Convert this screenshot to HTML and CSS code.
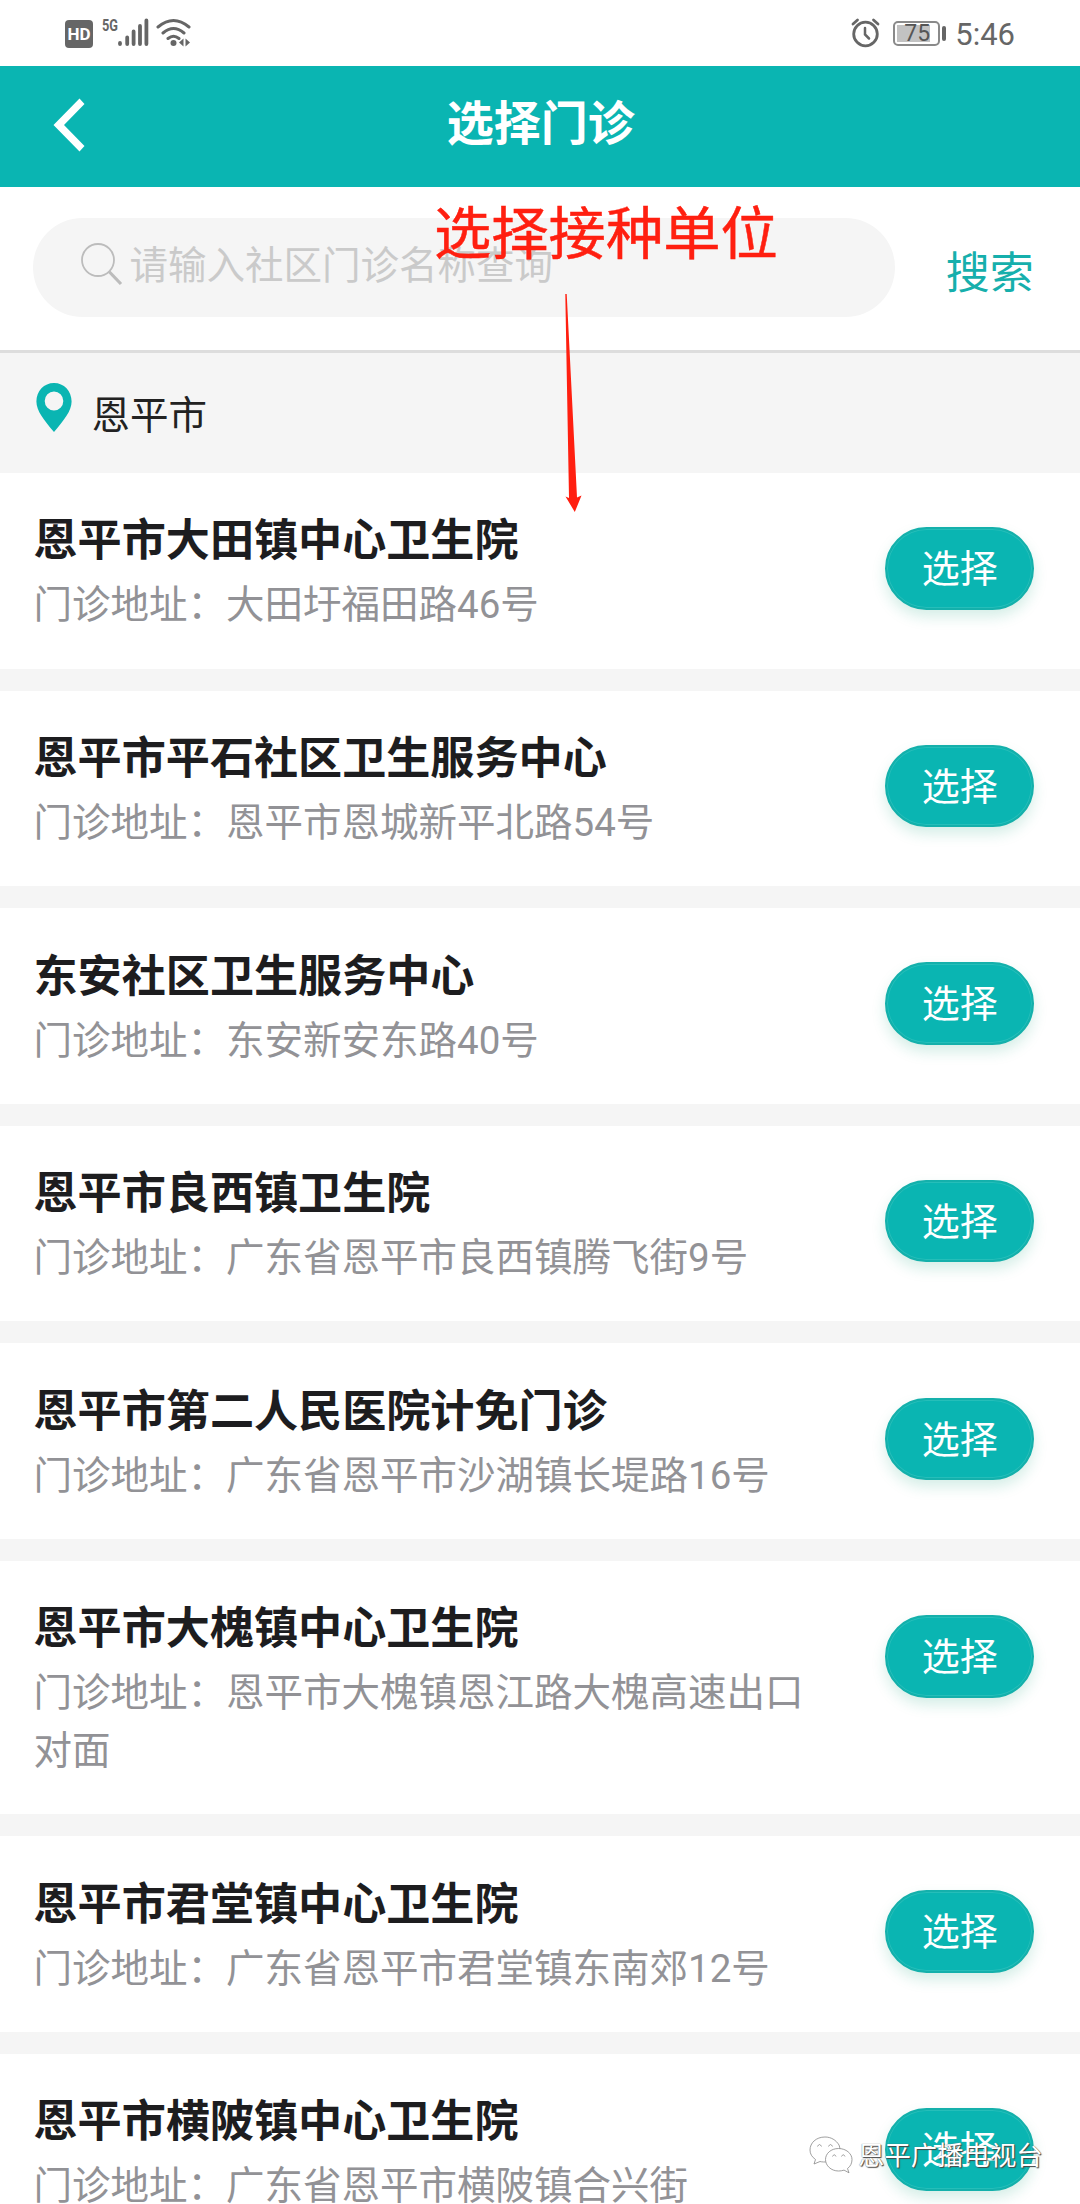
FILE: index.html
```html
<!DOCTYPE html>
<html lang="zh-CN">
<head>
<meta charset="utf-8">
<title>选择门诊</title>
<link rel="stylesheet" href="styles.css">
</head>
<body>
<div class="screen">
  <div class="status">
    <div class="status-left">
      <span class="hd">HD</span>
      <span class="net">5G</span>
      <svg class="signal" width="32" height="30" viewBox="0 0 32 30" stroke="#666" stroke-width="3.8" stroke-linecap="round"><path d="M3 25v1M10.2 19.5v6.5M16.6 13.500v12.500M23 8v18M29.400 2.500v23.500"/></svg>
      <svg class="wifi" width="36" height="30" viewBox="0 0 36 30" fill="none" stroke="#666" stroke-width="3" stroke-linecap="round"><path d="M2 9Q17.500-4 33 9M7 15Q17.500 6 28 15M12 20.500Q17.500 16 23 20.500"/><circle cx="17.500" cy="25" r="3" fill="#666" stroke="none"/><path d="M27.500 20.500v8l-4.500-4zM29.500 20.500v8l4.500-4z" fill="#666" stroke="none"/></svg>
    </div>
    <div class="status-right">
      <svg width="30" height="30" viewBox="0 0 30 30" fill="none" stroke="#666" stroke-width="2.800" stroke-linecap="round"><circle cx="14.500" cy="16" r="11.800"/><path d="M14 10v6.500l4 4" stroke-width="2.500"/><path d="M2 6l4.500-4M27 6l-4.500-4"/></svg>
      <div class="battery"><span>75</span></div>
      <span class="time">5:46</span>
    </div>
  </div>
  <header class="header">
    <svg class="back" width="32" height="54" viewBox="0 0 32 54"><path d="M26.500 .5l5 5.500L11 27l20.500 21-5 5.500L.5 27z" fill="#fff"/></svg>
    <h1>选择门诊</h1>
  </header>
  <div class="search">
    <div class="field">
      <svg width="42" height="44" viewBox="0 0 42 44" fill="none" stroke="#bcbcbc"><circle cx="17" cy="18" r="16" stroke-width="1.800"/><path d="M28 29.500L40 42" stroke-width="3.200"/></svg>
      <span>请输入社区门诊名称查询</span>
    </div>
    <a class="go">搜索</a>
  </div>
  <div class="place">
    <svg width="36" height="49" viewBox="0 0 36 49"><path fill="#0ab5b2" fill-rule="evenodd" d="M18 0C8 0 .4 8 .4 18.500C.4 28 8 37 18 49C28 37 35.600 28 35.600 18.500C35.600 8 28 0 18 0zM18 8.500a9.300 9.500 0 1 1 0 19a9.300 9.500 0 1 1 0-19z"/></svg>
    <span>恩平市</span>
  </div>
  <main class="list">
    <section class="row"><div class="info"><h2>恩平市大田镇中心卫生院</h2><p>门诊地址：大田圩福田路46号</p></div><button class="pick">选择</button></section>
    <section class="row"><div class="info"><h2>恩平市平石社区卫生服务中心</h2><p>门诊地址：恩平市恩城新平北路54号</p></div><button class="pick">选择</button></section>
    <section class="row"><div class="info"><h2>东安社区卫生服务中心</h2><p>门诊地址：东安新安东路40号</p></div><button class="pick">选择</button></section>
    <section class="row"><div class="info"><h2>恩平市良西镇卫生院</h2><p>门诊地址：广东省恩平市良西镇腾飞街9号</p></div><button class="pick">选择</button></section>
    <section class="row"><div class="info"><h2>恩平市第二人民医院计免门诊</h2><p>门诊地址：广东省恩平市沙湖镇长堤路16号</p></div><button class="pick">选择</button></section>
    <section class="row"><div class="info"><h2>恩平市大槐镇中心卫生院</h2><p>门诊地址：恩平市大槐镇恩江路大槐高速出口对面</p></div><button class="pick">选择</button></section>
    <section class="row"><div class="info"><h2>恩平市君堂镇中心卫生院</h2><p>门诊地址：广东省恩平市君堂镇东南郊12号</p></div><button class="pick">选择</button></section>
    <section class="row"><div class="info"><h2>恩平市横陂镇中心卫生院</h2><p>门诊地址：广东省恩平市横陂镇合兴街</p></div><button class="pick">选择</button></section>
  </main>
  <div class="note">选择接种单位</div>
  <svg class="arrow" width="20" height="220" viewBox="0 0 20 220"><path fill="#ff1f10" d="M3.300 1h1.400L15 204.500l4.500-2L12.800 219L3.500 203.500l3.500 1.500z"/></svg>
  <div class="watermark">
    <svg width="44" height="38" viewBox="0 0 44 38" fill="#fff" stroke="#888" stroke-width=".8"><path d="M16 1C7 1 1 7 1 14c0 4 2 7 5.500 9.500L5 28l6-2.500c2 .5 5 .7 7 .2C32 25 32 14 30 9C27 4 22 1 16 1z"/><path d="M29.500 12.500C22 12.500 16.500 17.500 16.500 23.500S22 35 29.500 35c2 0 4-.3 5.500-.9l5 2.700-1.500-4.300C41.500 30.500 43 27 43 23.500C43 17.500 37 12.500 29.500 12.500z"/><path fill="none" d="M8.500 10.500q2-4 4 0M19.500 10.500q2-4 4 0M23.500 20.500q1.800-3.500 3.500 0M32.500 20.500q1.800-3.500 3.500 0"/></svg>
    <span>恩平广播电视台</span>
  </div>
</div>
</body>
</html>
```
FILE: styles.css
```css
* { box-sizing: border-box; }
body { margin: 0; background: #fff; font-family: Roboto, "Noto Sans CJK SC", sans-serif; }
h1, h2, p { margin: 0; }
svg { display: block; flex: none; }
.screen { position: relative; width: 1080px; height: 2204px; overflow: hidden; background: #fff; }

.status { height: 66px; display: flex; justify-content: space-between; padding: 0 65px; color: #666; }
.status-left, .status-right { display: flex; align-items: flex-start; }
.hd { width: 28px; height: 28px; margin-top: 20px; border-radius: 4px; background: #666; color: #fff; font: 700 17px/28px Roboto, sans-serif; text-align: center; }
.net { margin: 16px 0 0 9px; width: 17px; font: 700 17px/19px Roboto, sans-serif; transform: scaleX(.75); transform-origin: left; }
.signal { margin: 18px 0 0 -2px; }
.wifi { margin: 18px 0 0 7px; }
.status-right svg { margin-top: 18px; }
.battery { position: relative; width: 47px; height: 25px; margin: 21px 0 0 12px; padding: 2px; border: 2px solid #8a8a8a; border-radius: 5px; }
.battery span { display: block; width: 33px; height: 17px; background: #c2c2c2; color: #555; font-size: 23px; line-height: 18px; padding-left: 7px; }
.battery::after { content: ""; position: absolute; left: 47px; top: 3px; width: 4px; height: 15px; border-radius: 2px; background: #666; }
.time { margin: 17px 0 0 15px; font-size: 31px; line-height: 36px; }

.header { height: 121.300px; display: flex; align-items: flex-start; background: #0ab5b2; color: #fff; }
.back { margin: 31.500px 0 0 53px; }
.header h1 { flex: 1; margin: 23px 83.500px 0 0; font-size: 47px; line-height: 70px; font-weight: 700; text-align: center; }

.search { height: 165.700px; display: flex; padding: 30.400px 0 0 33.400px; border-bottom: 3px solid #ddd; }
.field { width: 861.300px; height: 99px; display: flex; padding-left: 48px; border-radius: 50px; background: #f5f5f5; color: #cacaca; }
.field svg { margin-top: 24px; }
.field span { margin: 19px 0 0 6px; font-size: 38.500px; line-height: 58px; font-weight: 400; }
.go { margin: 23px 0 0 51px; font-size: 44px; line-height: 66px; color: #16afac; }

.place { height: 120px; display: flex; padding: 30px 0 0 36.400px; background: #f5f5f5; color: #222; }
.place span { margin: 4px 0 0 19px; font-size: 38.500px; line-height: 58px; }

.list { display: flex; flex-direction: column; gap: 22px; background: #f5f5f5; }
.row { display: flex; align-items: flex-start; justify-content: space-between; padding: 34.500px 46.200px 34.350px 33.500px; background: #fff; }
.info { width: 786px; }
.row h2 { font-size: 44.100px; line-height: 69px; font-weight: 700; color: #1d1d1f; white-space: nowrap; }
.row p { font-size: 38.500px; line-height: 57.750px; color: #929296; font-weight: 400; }
.pick { flex: none; width: 149px; height: 82.500px; margin: 19.700px 0 -10px; padding: 1px 0 0 1px; border: 2px solid #14b0ab; border-radius: 42px; background: #0ab5b2; box-shadow: inset 0 0 0 1px rgba(60, 196, 192, .55), 0 7px 14px rgba(20, 160, 120, .18); color: #fff; font: 400 38px/78px Roboto, "Noto Sans CJK SC", sans-serif; }

.note { position: absolute; left: 434px; top: 187px; font: 400 57.300px/86px "Noto Sans CJK SC", sans-serif; color: #ff1f10; -webkit-text-stroke: .5px #ff1f10; white-space: nowrap; }
.arrow { position: absolute; left: 562px; top: 293px; }
.watermark { position: absolute; left: 809px; top: 2136px; display: flex; align-items: flex-start; gap: 5px; color: #fff; font-size: 26.400px; line-height: 41px; text-shadow: 1px 1px 1px #444, 0 0 1px #555; white-space: nowrap; }
```
